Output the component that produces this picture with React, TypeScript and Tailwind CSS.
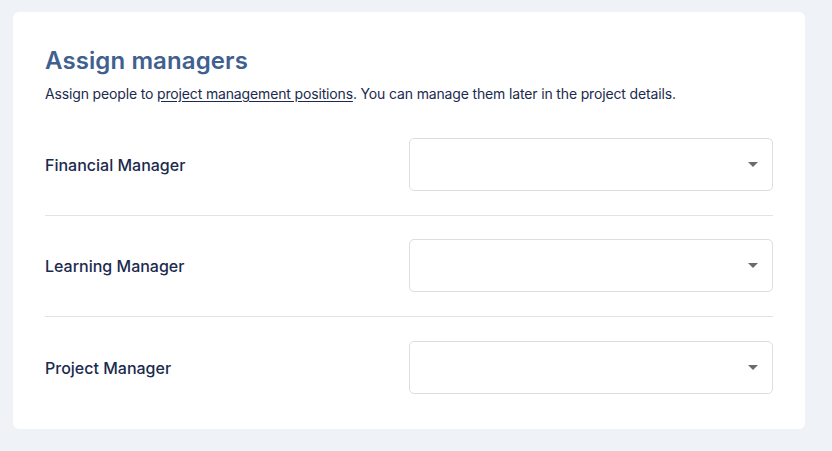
import React from "react";

const rows = ["Financial Manager", "Learning Manager", "Project Manager"];

function Caret() {
  return (
    <svg width="10" height="5" viewBox="0 0 10 5" className="block">
      <path d="M0 0 L10 0 L5 5 Z" fill="#6b6b6b" />
    </svg>
  );
}

export default function App() {
  return (
    <div className="min-h-[451px] w-[832px] bg-[#eff2f7] pt-3 pl-[13px]" style={{ fontFamily: "Inter, 'Noto Sans', sans-serif" }}>
      <div className="w-[792px] rounded-md bg-white px-8 pt-[34px] pb-[11px]">
        <h1 className="text-[24px] leading-[30px] font-semibold text-[#41608f] tracking-[0.1px]">Assign managers</h1>
        <p className="mt-[8px] text-[14px] leading-[20px] text-[#1b2a4e] tracking-[-0.15px]">
          Assign people to <span className="underline underline-offset-2">project management positions</span>. You can manage them later in the project details.
        </p>
        <div className="mt-[10px]">
          {rows.map((r, i) => (
            <div
              key={r}
              className={`grid grid-cols-2 items-center pb-6 ${i === 1 ? "pt-[23px]" : "pt-6"} ${i < rows.length - 1 ? "border-b border-[#e3e3e3]" : ""}`}
            >
              <div className="text-[16px] font-medium text-[#1b2a4e]">{r}</div>
              <div className="flex h-[53px] items-center justify-end rounded-[5px] border border-[#dedede] bg-white pr-[14px]">
                <Caret />
              </div>
            </div>
          ))}
        </div>
      </div>
    </div>
  );
}
